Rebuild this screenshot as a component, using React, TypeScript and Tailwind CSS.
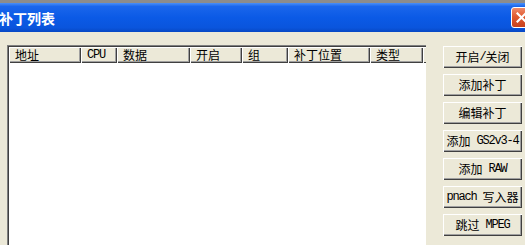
import React from "react";

const cjk = '"Noto Sans CJK SC", "Noto Sans", sans-serif';
const mono = '"Liberation Mono", "Noto Sans CJK SC", monospace';

function T({ text }: { text: string }) {
  const parts = text.match(/[\x00-\x7F]+|[^\x00-\x7F]+/g) || [];
  return (
    <>
      {parts.map((p, i) =>
        /^[\x00-\x7F]+$/.test(p) ? (
          <span key={i} className="text-[12px] tracking-[-1.2px] whitespace-pre" style={{ fontFamily: mono }}>
            {p}
          </span>
        ) : (
          <span key={i} className="text-[12px]" style={{ fontFamily: cjk }}>
            {p}
          </span>
        )
      )}
    </>
  );
}

const cols: { label: string; w: number }[] = [
  { label: "地址", w: 72 },
  { label: "CPU", w: 36 },
  { label: "数据", w: 73 },
  { label: "开启", w: 52 },
  { label: "组", w: 46 },
  { label: "补丁位置", w: 82 },
  { label: "类型", w: 53 },
];

const buttons = ["开启/关闭", "添加补丁", "编辑补丁", "添加 GS2v3-4", "添加 RAW", "pnach 写入器", "跳过 MPEG"];

export default function App() {
  return (
    <div className="w-[525px] h-[245px] overflow-hidden bg-[#ECE9D8] flex flex-col">
      <div className="h-[3px] bg-[#8c8c8c] shrink-0" />
      <div className="h-[29px] shrink-0 flex items-center bg-[linear-gradient(to_bottom,#4a8ff7_0%,#1a66ec_12%,#0b5ae6_50%,#0a55dd_85%,#0848c4_100%)]">
        <div
          className="flex-1 text-white text-[14px] font-bold leading-none pl-0 -ml-[1px] pt-[1px]"
          style={{ fontFamily: cjk }}
        >
          补丁列表
        </div>
        <div className="w-[21px] h-[21px] shrink-0 -mr-[7px] rounded-[3px] border border-white bg-[linear-gradient(to_bottom,#f08a6a,#e05a30_45%,#c8411e)] flex items-center justify-center">
          <svg width="11" height="11" viewBox="0 0 11 11">
            <path d="M1.5 1.5 L9.5 9.5 M9.5 1.5 L1.5 9.5" stroke="white" strokeWidth="2.2" strokeLinecap="square" />
          </svg>
        </div>
      </div>
      <div className="flex pl-[7px] pt-[13px] gap-[17px]">
        <div className="w-[419px] h-[210px] shrink-0 bg-white border-t border-l border-[#808080] shadow-[inset_1px_1px_#404040]">
          <div className="flex h-[16px] ml-[1px] mt-[1px]">
            {cols.map((c) => (
              <div
                key={c.label}
                className="h-full shrink-0 bg-[#ECE9D8] flex items-center pl-[6px] text-black shadow-[inset_1px_1px_#ffffff,inset_-1px_-1px_#404040,inset_-2px_-2px_#a0a0a0]"
                style={{ width: c.w }}
              >
                <T text={c.label} />
              </div>
            ))}
            <div className="h-full flex-1 bg-[#ECE9D8] shadow-[inset_1px_1px_#ffffff,inset_0_-1px_#404040]" />
          </div>
        </div>
        <div className="flex flex-col gap-[6px] mt-[1px] w-[79px] shrink-0">
          {buttons.map((b) => (
            <div
              key={b}
              className="h-[22px] bg-[#ECE9D8] flex items-center justify-center text-black whitespace-nowrap shadow-[inset_1px_1px_#ffffff,inset_-1px_-1px_#404040,inset_-2px_-2px_#a0a0a0]"
            >
              <T text={b} />
            </div>
          ))}
        </div>
      </div>
    </div>
  );
}
